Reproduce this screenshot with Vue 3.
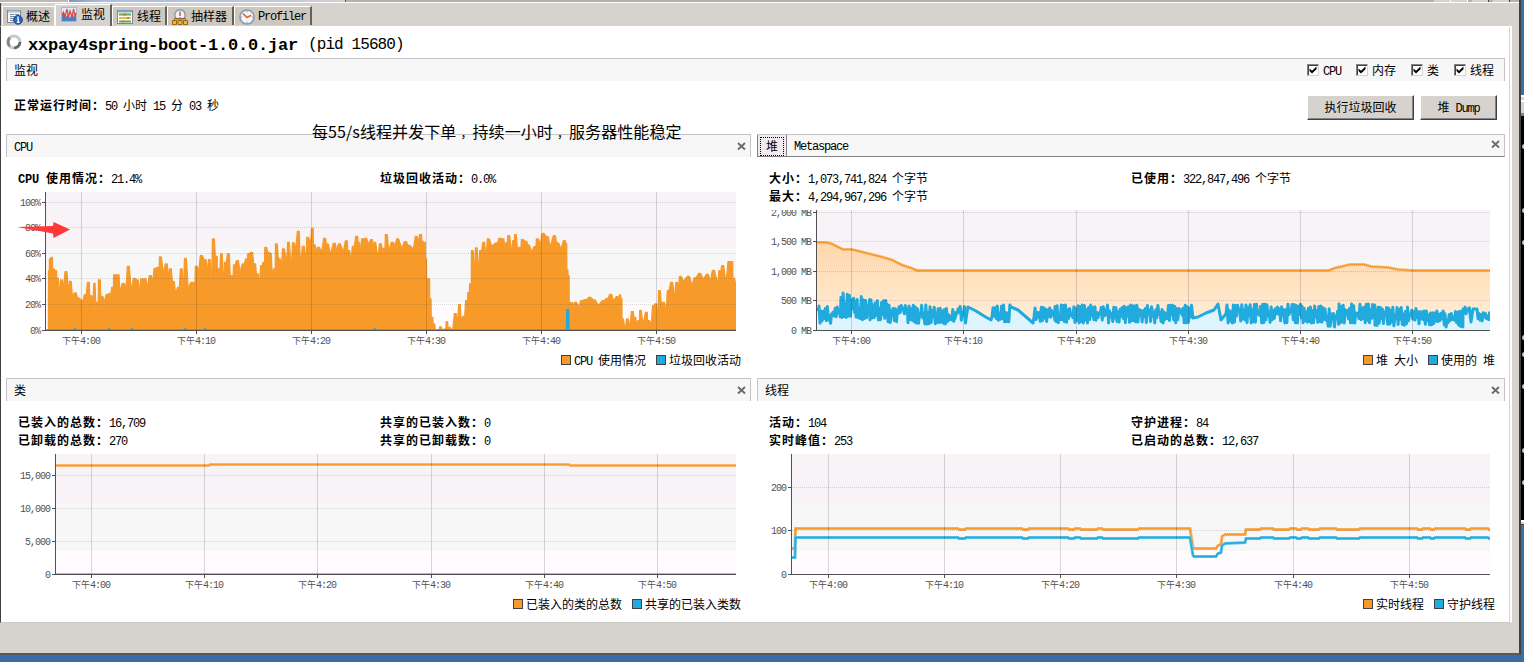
<template>
  <div class="desktop">
    <div class="window">
      <div class="title-strip">
        <span class="strip-left"></span>
        <span class="strip-blue"></span>
        <span class="strip-rest"></span>
        <i class="light"></i><i class="light"></i><i class="gap"></i><i></i><i class="gap"></i><i></i>
      </div>

      <div class="tabs">
        <div v-for="tab in tabs" :key="tab.icon" class="tab" :class="[{ active: tab.active }, tab.icon]">
          <svg class="tab-icon" width="16" height="16" viewBox="0 0 16 16">
            <g v-if="tab.icon === 'overview'">
              <rect x="0.5" y="1.5" width="13" height="12" fill="#f3f5f8" stroke="#7b8ba3" />
              <path d="M1 2.5h12" stroke="#b4c0d2" stroke-width="2" />
              <path d="M3 5.5h4M8 5.5h4M3 7.5h5M3 9.5h4M3 11.5h3" stroke="#7c8798" />
              <circle cx="11" cy="10.8" r="4.4" fill="#2b66c4" stroke="#17479b" />
              <path d="M11 7.6v1.6M10 10.2h1.3v3M9.8 13.3h2.8" stroke="#fff" stroke-width="1.3" fill="none" />
            </g>
            <g v-else-if="tab.icon === 'monitor'">
              <rect x="0.5" y="0.5" width="15" height="14" fill="#dcecfb" stroke="#a9b9d0" />
              <path d="M1 14V8l2-2 2 4 2-3 2 4 2-5 2 4 2-3v7z" fill="#4682c8" />
              <path d="M1 8l1.5-3L4 10l2-8 1.5 8L9 4l2 6 1.5-8L14 9l1-3" fill="none" stroke="#e2443d" stroke-width="1.2" />
            </g>
            <g v-else-if="tab.icon === 'threads'">
              <rect x="0.5" y="1.5" width="15" height="13" fill="#fff" stroke="#76889c" />
              <path d="M1 2.5h14" stroke="#8fa6c2" stroke-width="2" />
              <path d="M2 5.5h12" stroke="#57a955" stroke-width="2" />
              <path d="M2 9h12" stroke="#e9bd3b" stroke-width="2" />
              <path d="M2 12.5h12" stroke="#57a955" stroke-width="2" />
              <path d="M6 5.5h3M10 9h2M5 12.5h2" stroke="#d9713a" stroke-width="2" />
            </g>
            <g v-else-if="tab.icon === 'sampler'">
              <circle cx="8" cy="6" r="5.2" fill="#eef3f9" stroke="#8797ad" stroke-width="1.4" />
              <path d="M8 2.5V7" stroke="#d95b2c" stroke-width="1.5" />
              <path d="M2.5 12V9.5h11V12M8 8v4" fill="none" stroke="#93651b" />
              <path d="M0.5 11.5h4v4h-4zM6 11.5h4v4H6zM11.5 11.5h4v4h-4z" fill="#f1b63b" stroke="#976415" />
            </g>
            <g v-else>
              <circle cx="8" cy="8" r="7" fill="#f5f8fc" stroke="#8798b1" stroke-width="1.6" />
              <path d="M8 2v1.3M8 12.7V14M2 8h1.3M12.7 8H14" stroke="#8e9aac" />
              <path d="M3.8 4.5L8 8.4l4.2-2.2" fill="none" stroke="#e3692b" stroke-width="1.7" />
            </g>
          </svg>
          <Mix :t="tab.label" />
        </div>
      </div>

      <div class="page">
        <div class="heading">
          <svg class="spinner" width="16" height="16" viewBox="0 0 16 16">
            <circle cx="8" cy="8" r="6" fill="none" stroke="#c9c9cd" stroke-width="3" />
            <path d="M3.8 3.8A6 6 0 0 0 3.8 12.2" fill="none" stroke="#85858b" stroke-width="3" />
            <path d="M8 14A6 6 0 0 0 14 8" fill="none" stroke="#66666c" stroke-width="2.6" />
          </svg>
          <span class="app-name">xxpay4spring-boot-1.0.0.jar</span>
          <span class="pid">(pid 15680)</span>
        </div>

        <div class="bar section-bar">
          <Mix t="监视" />
          <div class="checks">
            <label v-for="name in checks" :key="name" class="check">
              <span class="box">
                <svg width="10" height="10" viewBox="0 0 10 10"><path d="M1.5 3.5v2.6L4 8.4l4.5-4.2V1.5L4 5.8z" /></svg>
              </span>
              <Mix :t="name" />
            </label>
          </div>
        </div>

        <div class="uptime-row">
          <div class="stat"><b><Mix t="正常运行时间：" /></b><Mix t="50 小时 15 分 03 秒" /></div>
          <div class="actions">
            <button class="gc"><Mix t="执行垃圾回收" /></button>
            <button class="dump"><Mix t="堆 Dump" /></button>
          </div>
        </div>

        <div class="cards">
          <div v-for="card in cards" :key="card.id" class="card">
            <div class="bar" :class="{ tabbed: card.tabs }">
              <template v-if="card.tabs">
                <span class="sub-tab selected"><span class="focus"><Mix :t="card.tabs[0]" /></span></span>
                <span class="sub-tab"><Mix :t="card.tabs[1]" /></span>
              </template>
              <Mix v-else :t="card.title" />
              <svg class="close" width="9" height="9" viewBox="0 0 9 9"><path d="M1 1l7 6.5M8 1L1 7.5" /></svg>
            </div>

            <div class="stats">
              <div v-for="stat in card.stats" :key="stat[0]" class="stat">
                <b><Mix :t="stat[0]" /></b><Mix :t="stat[1]" />
              </div>
            </div>

            <svg
              class="chart"
              width="745"
              :height="card.bottom + 18 - card.top"
              :viewBox="`${card.left} ${card.top} 745 ${card.bottom + 18 - card.top}`"
            >
              <defs>
                <linearGradient id="heapFill" x1="0" y1="0" x2="0" y2="1">
                  <stop offset="0" stop-color="#ffd7ad" />
                  <stop offset="0.45" stop-color="#ffe2c0" />
                  <stop offset="1" stop-color="#fff0df" />
                </linearGradient>
              </defs>
              <rect :x="card.axis" :y="card.top" :width="card.right - card.axis" :height="card.bands[0] - card.top" fill="#f7f3f7" />
              <rect :x="card.axis" :y="card.bands[0]" :width="card.right - card.axis" :height="card.bands[1] - card.bands[0]" fill="#f7f7f7" />
              <rect :x="card.axis" :y="card.bands[1]" :width="card.right - card.axis" :height="card.bottom - card.bands[1]" fill="#fffbff" />

              <svg
                :x="card.axis + 1"
                :y="card.top"
                :width="card.right - card.axis - 1"
                :height="card.bottom - card.top"
                :viewBox="`${card.axis + 1} ${card.top} ${card.right - card.axis - 1} ${card.bottom - card.top}`"
              >
                <g v-for="(s, i) in card.series" :key="i">
                  <polygon v-if="s.fill" :points="area(s.points, card.bottom)" :fill="s.fill" />
                  <polyline v-if="s.halo" :points="line(s.points)" fill="none" :stroke="s.halo" stroke-width="3" />
                  <polyline
                    :points="line(s.points)"
                    fill="none"
                    :stroke="s.color"
                    :stroke-width="s.halo ? 1.4 : s.width || 3"
                    stroke-linejoin="round"
                  />
                </g>
              </svg>

              <g class="grid" shape-rendering="crispEdges">
                <line v-for="t in card.yTicks.slice(1)" :key="t[1]" :x1="card.axis + 1" :x2="card.right" :y1="t[0] + 0.5" :y2="t[0] + 0.5" stroke-dasharray="1 1" />
                <line v-for="(x, i) in card.xTicks" :key="i" :x1="x + 0.5" :x2="x + 0.5" :y1="card.top" :y2="card.bottom" />
              </g>
              <g class="axis" shape-rendering="crispEdges">
                <line :x1="card.axis + 0.5" :x2="card.axis + 0.5" :y1="card.top" :y2="card.bottom + 1" />
                <line :x1="card.axis - 3" :x2="card.right" :y1="card.bottom + 0.5" :y2="card.bottom + 0.5" />
                <line v-for="t in card.yTicks" :key="t[1]" :x1="card.axis - 3" :x2="card.axis" :y1="t[0] + 0.5" :y2="t[0] + 0.5" />
                <line v-for="(x, i) in card.xTicks" :key="i" :x1="x + 0.5" :x2="x + 0.5" :y1="card.bottom" :y2="card.bottom + 4" />
              </g>
              <text v-for="t in card.yTicks" :key="t[1]" class="tick" text-anchor="end" :x="card.axis - 5" :y="t[0] + 4"><Mix :t="t[1]" tag="tspan" /></text>
              <text v-for="(x, i) in card.xTicks" :key="i" class="tick" text-anchor="middle" :x="x" :y="card.bottom + 14"><Mix :t="times[i]" tag="tspan" /></text>
            </svg>

            <div class="legend">
              <span v-for="(name, i) in card.legend" :key="name" class="legend-item">
                <i class="swatch" :class="i ? 'blue' : 'orange'"></i><Mix :t="name" />
              </span>
            </div>
          </div>
        </div>
      </div>
    </div>

    <div class="behind">
      <div class="behind-title"></div>
      <div class="terminal"><i v-for="y in dots" :key="y" :style="{ top: y + 'px' }"></i></div>
      <div class="behind-foot"></div>
    </div>

    <div class="note">每55/s线程并发下单<span class="comma">，</span>持续一小时<span class="comma">，</span>服务器性能稳定</div>
    <svg class="arrow" width="54" height="18" viewBox="0 0 54 18">
      <path d="M0 6l36-1 .5-4L53 8.5 36.5 17l-.5-4.500z" />
    </svg>
  </div>
</template>

<script setup>
import { h } from 'vue';

// Latin runs use a half-width fixed pitch next to full-width Chinese text
const Mix = (props) => {
  const tag = props.tag || 'span';
  const runs = props.t.match(/[\x00-\xff]+|[^\x00-\xff]+/g) || [];
  return h(tag, { class: 'mix' }, runs.map(run =>
    h(tag, { class: run.charCodeAt(0) < 256 ? 'latin' : 'han' }, run)
  ));
};
Mix.props = ['t', 'tag'];

const ORANGE = '#f79a29';
const BLUE = '#21aade';

const tabs = [
  { icon: 'overview', label: '概述' },
  { icon: 'monitor', label: '监视', active: true },
  { icon: 'threads', label: '线程' },
  { icon: 'sampler', label: '抽样器' },
  { icon: 'profiler', label: 'Profiler' }
];
const checks = ['CPU', '内存', '类', '线程'];
const times = ['下午4:00', '下午4:10', '下午4:20', '下午4:30', '下午4:40', '下午4:50'];
const dots = [26, 90, 122, 217, 234, 266, 330, 362];

// CPU samples, stored as "x,y" in thirds of a pixel
const cpuMorning = '145,614 146,435 150,400 155,395 160,430 168,435 172,458 179,505 184,463 190,483 198,438 205,495 211,467 217,503 226,502 235,517 248,520 256,507 265,470 272,510 279,525 283,473 288,550 292,530 298,463 305,512 315,520 320,507 330,503 338,485 343,448 355,448 360,492 370,473 378,483 385,422 394,490 403,458 412,463 418,500 425,460 435,460 442,478 451,450 458,468 465,428 475,425 481,394 490,433 499,415 505,450 511,430 520,468 527,500 535,485 544,430 550,505 556,398 565,485 575,470 582,470 589,422 595,435 604,390 615,402 622,435 628,402 634,500 640,340 649,392 655,430 659,440 664,385 670,485 676,410 685,385 692,470 697,450 703,418 712,405 720,430 730,415 740,400 745,385 755,380 764,415 772,445 778,475 785,420 791,410 797,365 806,380 811,383 817,450 823,430 829,355 838,400 844,425 850,370 860,402 865,350 874,430 880,352 887,365 895,317 901,412 910,362 918,410 922,335 932,342 937,308 943,358 949,373 955,365 965,370 974,338 982,355 991,377 1003,353 1010,368 1018,355 1030,370 1039,346 1046,375 1053,400 1060,362 1070,332 1077,350 1082,395 1087,340 1097,338 1105,347';
const cpuLate = '5,342 10,370 14,350 24,390 31,355 38,370 42,368 49,327 56,368 67,350 75,352 83,340 95,360 106,348 118,360 130,363 139,332 145,345 152,327 158,347 164,350 168,400 171,460 177,460 181,520 186,575 192,595 197,614 206,612 211,604 220,612 226,610 230,588 237,605 248,607 256,564 263,590 268,537 274,585 281,572 290,524 296,500 301,475 307,375 313,452 319,367 325,445 332,375 341,350 348,397 355,340 365,353 380,352 390,338 399,340 405,375 410,350 416,330 425,377 431,345 436,327 443,370 450,365 457,342 468,347 475,358 485,370 495,363 502,340 512,347 519,323 532,333 540,357 553,330 563,352 573,362 583,345 589,353 592,432 596,450 599,530 606,532 612,535 616,530 627,535 635,525 647,522 659,515 673,523 685,531 700,525 712,518 722,506 730,517 742,513 745,557 750,508 755,520 757,580 766,608 772,580 780,600 787,558 795,575 800,593 806,585 811,554 819,590 829,560 836,585 844,593 850,540 857,535 863,585 868,495 875,540 880,530 889,547 894,495 905,470 914,515 920,470 925,487 931,452 940,458 955,452 967,472 975,457 989,443 1000,452 1012,446 1021,460 1030,434 1043,465 1050,435 1058,420 1068,465 1077,408 1086,408 1091,458 1100,500';

const parse = (text, x0, y0) => text.split(' ').map(pair => {
  const [x, y] = pair.split(',').map(Number);
  return [x0 + x / 3, y0 + y / 3];
});

// Hold every sample that is not a valley for a moment, so the plot reads as bars
const flatten = points => points.flatMap((p, i) => {
  const before = points[i - 1];
  const after = points[i + 1];
  if (!before || !after) return [p];
  if (p[1] > before[1] && p[1] > after[1]) return [[p[0], p[1] + 3]];
  const left = Math.min(1, (p[0] - before[0]) * 0.45);
  const right = Math.min(1, (after[0] - p[0]) * 0.45);
  return [[p[0] - left, p[1]], [p[0] + right, p[1]]];
});

const cpu = flatten([...parse(cpuMorning, 0, 125.6), ...parse(cpuLate, 370, 125.6)]);

const gc = [[46, 330]];
[75, 109, 132, 185, 205, 375].forEach(x => gc.push([x - 1, 330], [x, 328.5], [x + 1, 330]));
gc.push([566.5, 330], [567, 309.5], [568.5, 309.5], [569, 330], [736, 330]);

// Used heap: [from, to, high, low] is a busy stretch, { path } is a calm one
const heapParts = [
  { path: [[817, 309.5], [819, 309.5]] },
  [819, 832, 306, 324], [832, 841, 306, 317], [841, 855, 292, 319],
  [855, 870, 296, 320], [870, 887, 300, 320], [887, 898, 304, 323],
  [898, 908, 305, 315], [908, 937, 305, 324], [937, 955, 308, 324],
  [955, 967, 306, 324],
  { path: [[968, 307], [976, 311], [984, 316], [991, 320]] },
  [992, 1010, 305, 322],
  { path: [[1011, 307], [1018, 310], [1025, 316], [1033, 323]] },
  [1034, 1055, 307, 322], [1055, 1192, 305, 323],
  { path: [[1193, 318], [1198, 317], [1206, 313], [1214, 310], [1218, 304], [1221, 320], [1225, 315]] },
  [1226, 1302, 304, 323], [1302, 1325, 306, 323], [1325, 1339, 307, 327],
  [1339, 1375, 304, 323], [1375, 1418, 307, 326], [1418, 1445, 311, 325],
  [1445, 1463, 311, 327], [1463, 1470, 307, 314],
  { path: [[1471, 322], [1473, 309], [1477, 309]] },
  [1478, 1491, 312, 321]
];

const buildHeap = () => {
  let seed = 7;
  const random = () => {
    seed = (seed * 16807) % 2147483647;
    return seed / 2147483647;
  };
  const points = [];
  let up = true;
  heapParts.forEach(part => {
    if (part.path) {
      points.push(...part.path);
      return;
    }
    const [from, to, high, low] = part;
    for (let x = from; x < to; x += 1.05) {
      const drift = random() * random() * (low - high) * 0.7;
      points.push([x, up ? high + drift : low - drift]);
      up = !up;
    }
  });
  return points;
};

const heapSize = [
  [816, 242.5], [826, 242.5], [832, 244], [837, 246.5], [843, 249.5], [852, 249.5],
  [860, 251.5], [870, 254], [882, 257], [892, 260], [902, 265], [911, 268], [917, 270.5],
  [1329, 270.5], [1335, 268], [1342, 266.5], [1350, 264.5], [1364, 264.5],
  [1371, 266.5], [1388, 267.5], [1398, 269.5], [1412, 270.5], [1490, 270.5]
];

const classes = [[56, 465.5], [209, 465.5], [210, 464.5], [569, 464.5], [570, 465.5], [736, 465.5]];

// Small one-thread dips shared by the live and daemon lines
const dips = [
  [958, 965], [1022, 1028], [1068, 1074], [1080, 1097], [1102, 1138],
  [1273, 1289], [1296, 1301], [1308, 1319], [1336, 1359],
  [1417, 1422], [1430, 1434], [1465, 1470], [1488, 1492]
];
const threadLine = (start, base, valley, step, settle) => {
  const points = [[792, start], [795, start], [795.5, base]];
  const addDip = ([a, b]) => points.push([a, base], [a + 1, base + 1], [b, base + 1], [b + 1, base]);
  dips.filter(d => d[0] < 1190).forEach(addDip);
  points.push([1190, base], [1193, valley - 1], [1194, valley], [1216, valley], [1218, valley - 3],
    [1221, valley - 4], [1222, step + 2], [1225, step], [1245, settle], [1246, base + 1], [1260, base + 1], [1261, base]);
  dips.filter(d => d[0] > 1262).forEach(addDip);
  return points;
};

const cards = [
  {
    id: 'cpu',
    title: 'CPU',
    stats: [['CPU 使用情况：', '21.4%'], ['垃圾回收活动：', '0.0%']],
    left: 6, axis: 45, right: 736, top: 192, bottom: 330, bands: [248, 303],
    yTicks: [[330, '0%'], [304, '20%'], [278, '40%'], [253, '60%'], [227, '80%'], [202, '100%']],
    xTicks: [81, 196, 311, 426, 541, 656],
    series: [{ points: cpu, color: ORANGE, fill: ORANGE, width: 1.2 }, { points: gc, color: BLUE, fill: BLUE, width: 1.6 }],
    legend: ['CPU 使用情况', '垃圾回收活动']
  },
  {
    id: 'heap',
    tabs: ['堆', 'Metaspace'],
    stats: [['大小：', '1,073,741,824 个字节'], ['已使用：', '322,847,496 个字节'], ['最大：', '4,294,967,296 个字节']],
    left: 757, axis: 816, right: 1490, top: 210, bottom: 330, bands: [260, 306],
    yTicks: [[330, '0 MB'], [300, '500 MB'], [271, '1,000 MB'], [241, '1,500 MB'], [212, '2,000 MB']],
    xTicks: [851, 963, 1076, 1188, 1300, 1412],
    series: [
      { points: heapSize, color: ORANGE, halo: '#fcc080', fill: 'url(#heapFill)' },
      { points: buildHeap(), color: BLUE, fill: '#def5ff' }
    ],
    legend: ['堆 大小', '使用的 堆']
  },
  {
    id: 'classes',
    title: '类',
    stats: [['已装入的总数：', '16,709'], ['共享的已装入数：', '0'], ['已卸载的总数：', '270'], ['共享的已卸载数：', '0']],
    left: 6, axis: 55, right: 736, top: 454, bottom: 574, bands: [503, 551],
    yTicks: [[574, '0'], [541, '5,000'], [508, '10,000'], [475, '15,000']],
    xTicks: [91, 204, 317, 431, 544, 657],
    series: [
      { points: classes, color: ORANGE, halo: '#fcc080' },
      { points: [[56, 573.5], [736, 573.5]], color: '#7accf0', width: 1 }
    ],
    legend: ['已装入的类的总数', '共享的已装入类数']
  },
  {
    id: 'threads',
    title: '线程',
    stats: [['活动：', '104'], ['守护进程：', '84'], ['实时峰值：', '253'], ['已启动的总数：', '12,637']],
    left: 757, axis: 791, right: 1490, top: 454, bottom: 574, bands: [503, 551],
    yTicks: [[574, '0'], [530, '100'], [487, '200']],
    xTicks: [828, 944, 1060, 1176, 1293, 1409],
    series: [
      { points: threadLine(548.5, 528.5, 548.5, 534.5, 534.5), color: ORANGE, halo: '#fbb566' },
      { points: threadLine(557.5, 537.5, 556.5, 543.5, 542.5), color: BLUE, halo: '#62c3e8' }
    ],
    legend: ['实时线程', '守护线程']
  }
];

const line = points => points.map(p => p.join(',')).join(' ');
const area = (points, bottom) =>
  `${points[0][0]},${bottom} ${line(points)} ${points[points.length - 1][0]},${bottom}`;
</script>

<style>
body {
  margin: 0;
  overflow: hidden;
}

.mix {
  white-space: pre;
}

.mix .latin {
  font-family: 'Liberation Mono', monospace;
  letter-spacing: -1.2px;
}

b .mix .latin {
  letter-spacing: -0.2px;
}

b .mix .han {
  letter-spacing: 1px;
}

.tick .latin {
  font-size: 10px;
  letter-spacing: -1px;
}

.tick .han {
  font-size: 9px;
}
</style>

<style scoped>
.desktop {
  position: relative;
  display: flex;
  width: 1524px;
  height: 662px;
  overflow: hidden;
  background: #396da5;
  color: #000;
  font: 12px/18px 'Liberation Sans', 'Noto Sans CJK SC', sans-serif;
}

.window {
  box-sizing: border-box;
  display: flex;
  flex-direction: column;
  width: 1521px;
  height: 655px;
  border-right: 2px solid #424142;
  border-bottom: 2px solid #5a5855;
  background: #d6d3ce;
}

.title-strip {
  display: flex;
  height: 2px;
  border-bottom: 1px solid #fff;
  background: #b5b2a9;
}

.strip-left {
  width: 68px;
  border-right: 1px solid #fff;
  background: #bdbab4;
}

.strip-blue {
  width: 276px;
  border-right: 1px solid #555;
  background: linear-gradient(90deg, #7f97bb, #a9bfdf 12%, #b9c4dc 60%, #d6cfd0);
}

.strip-rest {
  width: 1088px;
}

.title-strip i {
  width: 16px;
  background: #d6d3ce;
  border-right: 1px solid #424142;
}

.title-strip i.light {
  border-color: #fff;
}

.title-strip i.gap {
  width: 4px;
  border: 0;
  background: none;
}

.tabs {
  display: flex;
  align-items: flex-end;
  height: 22px;
  padding: 0 0 1px 1px;
  border-left: 1px solid #424142;
}

.tab {
  box-sizing: border-box;
  display: flex;
  align-items: center;
  height: 19px;
  padding: 1px 0 0 4px;
  border-top: 1px solid #fff;
  border-left: 1px solid #fff;
  border-right: 2px solid #63615d;
  background: #cec7be;
}

.tab.overview {
  width: 53px;
  border-right: 1px solid #fff;
}

.tab.monitor {
  width: 57px;
}

.tab.threads {
  width: 55px;
}

.tab.sampler {
  width: 67px;
}

.tab.profiler {
  width: 78px;
}

.tab.active {
  height: 22px;
  margin-bottom: -1px;
  padding: 0 0 2px 5px;
  background: #d6d3ce;
}

.tab-icon {
  flex: none;
  margin-right: 4px;
}

.overview .tab-icon,
.sampler .tab-icon,
.profiler .tab-icon {
  margin-right: 3px;
}

.page {
  box-sizing: border-box;
  width: 1512px;
  height: 597px;
  padding: 0 5px 0 5px;
  border-top: 1px solid #fff;
  border-left: 1px solid #424142;
  border-right: 2px solid #fff;
  border-bottom: 1px solid #cbc9c5;
  background: #fff;
  box-shadow: inset -1px 0 #d6d3ce;
}

.heading {
  display: flex;
  height: 31px;
  line-height: 37px;
  font-family: 'Liberation Mono', monospace;
  white-space: pre;
}

.spinner {
  margin: 7px 6px 0 0;
}

.app-name {
  width: 280px;
  font-size: 17px;
  font-weight: bold;
  letter-spacing: -0.2px;
}

.pid {
  font-size: 16px;
  letter-spacing: -0.9px;
}

.bar {
  box-sizing: border-box;
  display: flex;
  align-items: center;
  height: 23px;
  padding: 2px 4px 0 7px;
  border: 1px solid #c6c3c6;
  border-bottom: 0;
  background: #f7f7f7;
}

.section-bar {
  width: 1499px;
}

.checks {
  display: flex;
  gap: 15px;
  margin-left: auto;
  padding-right: 6px;
}

.check {
  display: flex;
  align-items: center;
  gap: 4px;
}

.box {
  box-sizing: border-box;
  width: 12px;
  height: 12px;
  margin-top: -2px;
  border: 1px solid;
  border-color: #848284 #d6d3ce #d6d3ce #848284;
  box-shadow: inset 1px 1px #424142;
  background: #fff;
}

.box svg {
  display: block;
}

.uptime-row {
  display: flex;
  justify-content: space-between;
  width: 1491px;
  height: 53px;
}

.uptime-row .stat {
  padding: 16px 0 0 8px;
}

.actions {
  display: flex;
  gap: 6px;
  padding-top: 14px;
}

button {
  box-sizing: border-box;
  height: 25px;
  padding: 1px 0 0;
  border: 1px solid;
  border-color: #fff #424142 #424142 #fff;
  box-shadow: inset -1px -1px #848284;
  background: #d6d3ce;
  color: #000;
  font: inherit;
}

.gc {
  width: 107px;
}

.dump {
  width: 77px;
}

.cards {
  display: grid;
  grid-template-columns: 745px 748px;
  column-gap: 6px;
  row-gap: 4px;
}

.card {
  height: 240px;
}

.tabbed {
  padding: 0 4px 0 0;
  border-left: 0;
  border-bottom: 1px solid #848284;
}

.sub-tab {
  padding: 2px 7px 0;
}

.selected {
  box-sizing: border-box;
  align-self: stretch;
  width: 30px;
  margin-bottom: -1px;
  padding: 2px;
  border: 1px solid #848284;
  border-width: 0 1px 1px;
  background: #f0ebf0;
}

.focus {
  display: block;
  height: 17px;
  padding-left: 5px;
  border: 1px dotted #000;
}

.close {
  margin: 0 0 2px auto;
}

.close path {
  stroke: #6b696b;
  stroke-width: 1.8;
}

.stats {
  display: grid;
  grid-template-columns: 362px 362px;
  padding: 13px 0 0 12px;
}

.stat {
  height: 18px;
  white-space: pre;
}

.chart {
  display: block;
  margin-top: 4px;
  overflow: hidden;
}

.grid line {
  stroke: #000;
  stroke-opacity: 0.15;
}

.axis line {
  stroke: #525152;
}

.tick {
  fill: #525152;
}

.legend {
  display: flex;
  justify-content: flex-end;
  gap: 10px;
  height: 26px;
  padding-right: 10px;
  line-height: 27px;
}

.legend-item {
  display: flex;
}

.swatch {
  box-sizing: border-box;
  width: 10px;
  height: 10px;
  margin: 7px 3px 0 0;
  border: 1px solid #424142;
}

.orange {
  background: #f79a29;
}

.blue {
  background: #21aade;
}

.behind {
  display: flex;
  flex-direction: column;
  width: 3px;
  padding-top: 95px;
}

.behind-title {
  height: 25px;
  background: linear-gradient(#fff 2px, #d6d3ce 2px 5px, #fff 5px 7px, #d6d3ce 7px 18px, #848284 18px 21px, #000 21px);
}

.terminal {
  position: relative;
  height: 400px;
  background: #000;
}

.terminal i {
  position: absolute;
  left: 1px;
  width: 4px;
  height: 5px;
  margin-top: -2px;
  border-radius: 50%;
  background: #c6c3c6;
}

.behind-foot {
  height: 5px;
  background: linear-gradient(#fff 2px, #d6d3ce 2px 4px, #424142 4px);
}

.note {
  position: absolute;
  left: 312px;
  top: 119px;
  font: 16px/24px 'Noto Sans CJK SC', sans-serif;
  letter-spacing: 0.08px;
  white-space: nowrap;
}

.comma {
  padding-left: 4px;
  font-size: 12px;
}

.arrow {
  position: absolute;
  left: 17px;
  top: 221px;
  fill: #ff3838;
}
</style>
